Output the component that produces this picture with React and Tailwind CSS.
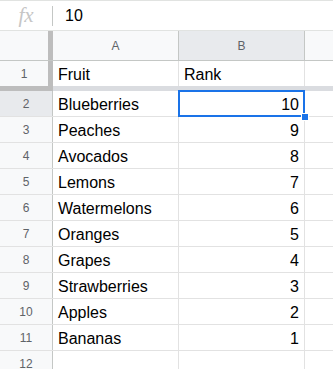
const rows = [
  ["Blueberries", 10],
  ["Peaches", 9],
  ["Avocados", 8],
  ["Lemons", 7],
  ["Watermelons", 6],
  ["Oranges", 5],
  ["Grapes", 4],
  ["Strawberries", 3],
  ["Apples", 2],
  ["Bananas", 1],
];

const font = { fontFamily: '"Liberation Sans", Arial, sans-serif' };

const RowHead = ({ n, selected }) => (
  <div
    className={`w-[53px] shrink-0 flex items-center justify-center pt-[1px] border-r border-[#c4c7c5] text-[12px] text-[#5f6368] ${
      selected ? "bg-[#e8eaed]" : "bg-[#f8f9fa]"
    }`}
  >
    {n}
  </div>
);

export default function App() {
  return (
    <div className="w-[333px] h-[369px] overflow-hidden bg-white text-[#000]" style={font}>
      {/* formula bar */}
      <div className="h-[31px] flex items-center border-t border-b border-[#e1e3e1]">
        <div className="w-[52px] flex items-center justify-center">
          <span
            className="text-[21px] italic text-[#c6c6c6] leading-none"
            style={{ fontFamily: '"Liberation Serif", serif' }}
          >
            fx
          </span>
        </div>
        <div className="w-px h-[20px] bg-[#c4c7c5]" />
        <div className="pl-[12px] text-[16px]">10</div>
      </div>

      {/* column header */}
      <div className="h-[30px] flex border-b border-[#c4c7c5] text-[12px] text-[#5f6368]">
        <div className="w-[48px] shrink-0 bg-[#f8f9fa]" />
        <div className="w-[5px] shrink-0 bg-[#bdbdbd]" />
        <div className="w-[126px] shrink-0 flex items-center justify-center bg-[#f8f9fa] border-r border-[#c4c7c5]">
          A
        </div>
        <div className="w-[126px] shrink-0 flex items-center justify-center bg-[#e8eaed] border-r border-[#c4c7c5]">
          B
        </div>
        <div className="flex-1 bg-[#f8f9fa]" />
      </div>

      {/* row 1 (frozen) */}
      <div className="h-[25px] flex text-[16px]">
        <div className="w-[48px] shrink-0 flex items-center justify-center pt-[1px] bg-[#f8f9fa] text-[12px] text-[#5f6368]">
          1
        </div>
        <div className="w-[5px] shrink-0 bg-[#bdbdbd]" />
        <div className="w-[126px] shrink-0 flex items-center pl-[5px] pt-[2px] border-r border-[#e2e2e2]">Fruit</div>
        <div className="w-[126px] shrink-0 flex items-center pl-[5px] pt-[2px] border-r border-[#e2e2e2]">Rank</div>
        <div className="flex-1" />
      </div>

      {/* freeze bar */}
      <div className="h-[5px] flex">
        <div className="w-[53px] shrink-0 bg-[#bdbdbd]" />
        <div className="flex-1 bg-[#dadce0]" />
      </div>

      {rows.map(([fruit, rank], i) => (
        <div key={fruit} className="h-[26px] flex text-[16px] border-b border-[#e2e2e2]">
          <RowHead n={i + 2} selected={i === 0} />
          <div className="w-[126px] shrink-0 flex items-center pl-[5px] pt-[2px] border-r border-[#e2e2e2]">
            {fruit}
          </div>
          <div
            className={`relative w-[126px] shrink-0 flex items-center justify-end pr-[5px] pt-[2px] border-r border-[#e2e2e2] ${
              i === 0 ? "z-10" : ""
            }`}
          >
            {rank}
            {i === 0 && (
              <>
                <div className="absolute -left-[1px] -top-[1px] -right-[1px] -bottom-[1px] border-2 border-[#1a73e8]" />
                <div className="absolute -right-[5px] -bottom-[5px] w-[8px] h-[8px] bg-[#1a73e8] border border-white" />
              </>
            )}
          </div>
          <div className="flex-1" />
        </div>
      ))}

      <div className="h-[26px] flex text-[16px] border-b border-[#e2e2e2]">
        <RowHead n={12} />
        <div className="w-[126px] shrink-0 border-r border-[#e2e2e2]" />
        <div className="w-[126px] shrink-0 border-r border-[#e2e2e2]" />
        <div className="flex-1" />
      </div>
    </div>
  );
}
